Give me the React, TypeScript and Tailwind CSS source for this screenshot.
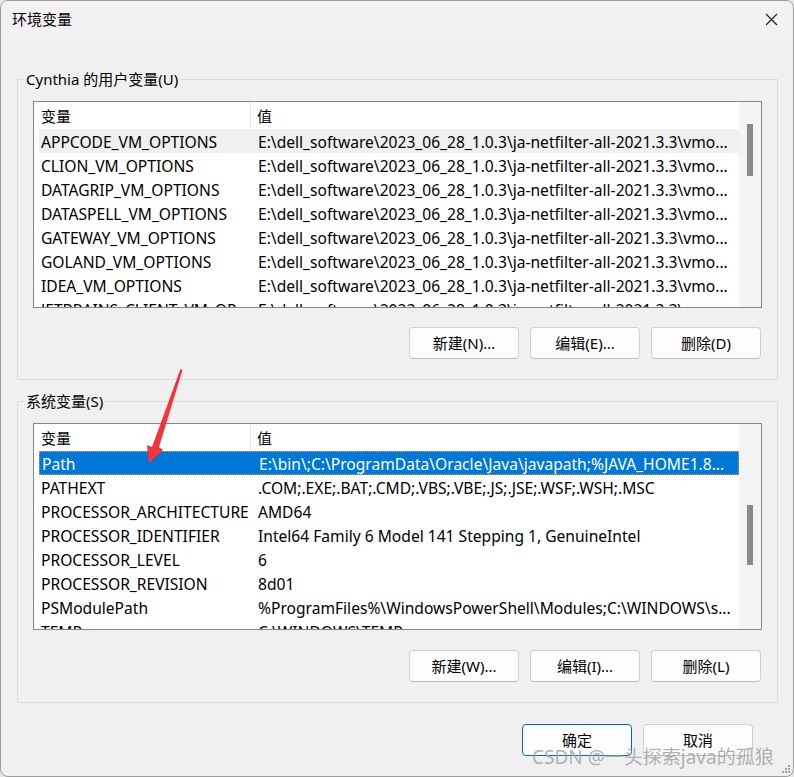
const userRows: [string, string][] = [
  ["APPCODE_VM_OPTIONS", "E:\\dell_software\\2023_06_28_1.0.3\\ja-netfilter-all-2021.3.3\\vmo..."],
  ["CLION_VM_OPTIONS", "E:\\dell_software\\2023_06_28_1.0.3\\ja-netfilter-all-2021.3.3\\vmo..."],
  ["DATAGRIP_VM_OPTIONS", "E:\\dell_software\\2023_06_28_1.0.3\\ja-netfilter-all-2021.3.3\\vmo..."],
  ["DATASPELL_VM_OPTIONS", "E:\\dell_software\\2023_06_28_1.0.3\\ja-netfilter-all-2021.3.3\\vmo..."],
  ["GATEWAY_VM_OPTIONS", "E:\\dell_software\\2023_06_28_1.0.3\\ja-netfilter-all-2021.3.3\\vmo..."],
  ["GOLAND_VM_OPTIONS", "E:\\dell_software\\2023_06_28_1.0.3\\ja-netfilter-all-2021.3.3\\vmo..."],
  ["IDEA_VM_OPTIONS", "E:\\dell_software\\2023_06_28_1.0.3\\ja-netfilter-all-2021.3.3\\vmo..."],
  ["JETBRAINS_CLIENT_VM_OP...", "E:\\dell_software\\2023_06_28_1.0.3\\ja-netfilter-all-2021.3.3\\vmo..."],
];

const systemRows: [string, string][] = [
  ["Path", "E:\\bin\\;C:\\ProgramData\\Oracle\\Java\\javapath;%JAVA_HOME1.8..."],
  ["PATHEXT", ".COM;.EXE;.BAT;.CMD;.VBS;.VBE;.JS;.JSE;.WSF;.WSH;.MSC"],
  ["PROCESSOR_ARCHITECTURE", "AMD64"],
  ["PROCESSOR_IDENTIFIER", "Intel64 Family 6 Model 141 Stepping 1, GenuineIntel"],
  ["PROCESSOR_LEVEL", "6"],
  ["PROCESSOR_REVISION", "8d01"],
  ["PSModulePath", "%ProgramFiles%\\WindowsPowerShell\\Modules;C:\\WINDOWS\\s..."],
  ["TEMP", "C:\\WINDOWS\\TEMP"],
];

function Button({ label, primary }: { label: string; primary?: boolean }) {
  return (
    <button
      className={
        "w-[110px] h-[32px] rounded-[4px] bg-[#fdfdfd] text-[15px] leading-[20px] text-black " +
        (primary ? "border border-[#0067c0]" : "border border-[#d0d0d0] border-b-[#bdbdbd]")
      }
    >
      {label}
    </button>
  );
}

function VarList({
  rows,
  thumbTop,
  thumbHeight,
  hover,
  selected,
}: {
  rows: [string, string][];
  thumbTop: string;
  thumbHeight: string;
  hover?: number;
  selected?: number;
}) {
  return (
    <div className="h-[207px] border border-[#868686] bg-white flex overflow-hidden text-[15.6px]">
      <div className="flex-1 flex flex-col pl-[5px] overflow-hidden">
        <div className="h-[27px] shrink-0 flex items-center text-[15px]">
          <div className="w-[212px] h-full flex items-center pl-[2px] border-r border-[#e5e5e5]">变量</div>
          <div className="pl-[6px]">值</div>
        </div>
        {rows.map(([name, value], i) => (
          <div
            key={name}
            className={
              "h-[24px] shrink-0 flex items-center whitespace-nowrap overflow-hidden " +
              (i === selected
                ? "bg-[#0078d7] text-white border border-dotted border-[#e0a040]"
                : i === hover
                ? "bg-[#f0f0f0]"
                : "")
            }
          >
            <div className="w-[212px] shrink-0 pl-[2px] mt-[2px] overflow-hidden">{name}</div>
            <div className="pl-[7px] mt-[2px]">{value}</div>
          </div>
        ))}
      </div>
      <div className="w-[22px] shrink-0 bg-[#f4f4f4] flex flex-col items-center">
        <div className={"w-[6px] bg-[#8a8a8a] " + thumbTop + " " + thumbHeight} />
      </div>
    </div>
  );
}

function Group({
  title,
  children,
}: {
  title: string;
  children: React.ReactNode;
}) {
  return (
    <fieldset className="w-[761px] border border-[#dcdcdc] p-0 m-0">
      <legend className="ml-[6px] px-[2px] text-[15px] leading-[20px]">{title}</legend>
      <div className="px-[15px] pt-[12px] pb-[20px]">{children}</div>
    </fieldset>
  );
}

export default function App() {
  return (
    <div className="w-[794px] h-[777px] bg-[#e6e6e6]">
      <div
        className="relative w-[794px] h-[777px] bg-[#f0f0f0] border border-[#9c9c9c] rounded-[8px] overflow-hidden flex flex-col text-[15px] text-black"
        style={{ fontFamily: '"Noto Sans", "Noto Sans CJK SC", sans-serif' }}
      >
        <div className="h-[36px] shrink-0 bg-[#f3f1f4] flex items-center justify-between pl-[11px] pr-[14px]">
          <span className="text-[15px] leading-[20px]">环境变量</span>
          <svg width="13" height="13" viewBox="0 0 13 13" className="mr-[1px]">
            <path d="M1 1 L12 12 M12 1 L1 12" stroke="#1a1a1a" strokeWidth="1.1" />
          </svg>
        </div>

        <div className="flex flex-col pl-[16px] leading-[20px]">
          <div className="mt-[32px]">
            <Group title="Cynthia 的用户变量(U)">
              <VarList rows={userRows} thumbTop="mt-[22px]" thumbHeight="h-[52px]" hover={0} />
              <div className="mt-[19px] flex justify-end gap-[11px] pr-[1px]">
                <Button label="新建(N)..." />
                <Button label="编辑(E)..." />
                <Button label="删除(D)" />
              </div>
            </Group>
          </div>

          <div className="mt-[11px]">
            <Group title="系统变量(S)">
              <VarList rows={systemRows} thumbTop="mt-[81px]" thumbHeight="h-[60px]" selected={0} />
              <div className="mt-[20px] flex justify-end gap-[11px] pr-[1px]">
                <Button label="新建(W)..." />
                <Button label="编辑(I)..." />
                <Button label="删除(L)" />
              </div>
            </Group>
          </div>

          <div className="mt-[21px] flex justify-end gap-[11px] pr-[41px] w-[777px]">
            <Button label="确定" primary />
            <Button label="取消" />
          </div>
        </div>

        {/* red annotation arrow */}
        <svg className="absolute left-[140px] top-[360px]" width="50" height="110" viewBox="140 360 50 110">
          <polygon
            points="179.5,368 181.5,369 158,446 162,449 148,462.5 146,444 151,446"
            fill="#f5333b"
          />
        </svg>

        {/* watermark */}
        <div
          className="absolute left-[531px] top-[744px] text-[19px] leading-[24px] text-[rgba(110,110,110,0.55)] whitespace-nowrap"
          style={{ textShadow: "0 0 1px rgba(255,255,255,0.6)" }}
        >
          CSDN @一头探索java的孤狼
        </div>

        {/* size grip */}
        <svg className="absolute right-[3px] bottom-[3px]" width="10" height="10" viewBox="0 0 10 10">
          <rect x="8" y="2" width="2" height="2" fill="#a0a0a0" />
          <rect x="5" y="5" width="2" height="2" fill="#a0a0a0" />
          <rect x="8" y="5" width="2" height="2" fill="#a0a0a0" />
          <rect x="2" y="8" width="2" height="2" fill="#a0a0a0" />
          <rect x="5" y="8" width="2" height="2" fill="#a0a0a0" />
          <rect x="8" y="8" width="2" height="2" fill="#a0a0a0" />
        </svg>
      </div>
    </div>
  );
}
